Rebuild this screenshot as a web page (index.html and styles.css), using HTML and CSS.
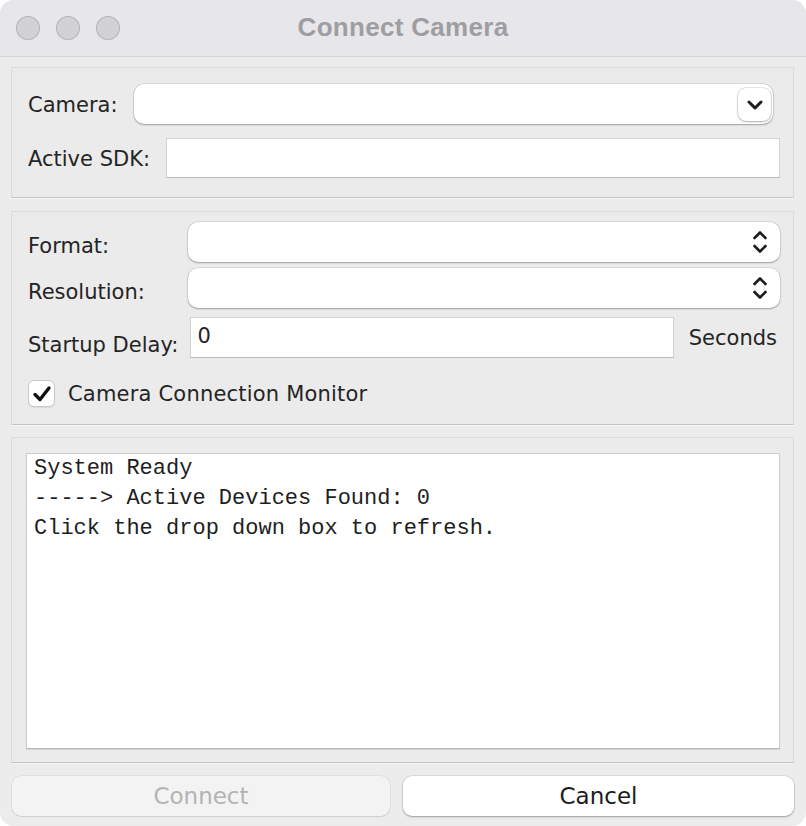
FILE: index.html
```html
<!DOCTYPE html>
<html>
<head>
<meta charset="utf-8">
<link rel="stylesheet" href="styles.css">
</head>
<body>
<div class="window">
  <div class="titlebar">
    <div class="lights">
      <span class="light"></span><span class="light"></span><span class="light"></span>
    </div>
    <div class="title">Connect Camera</div>
  </div>
  <div class="content">
    <div class="panel panel-camera">
      <div class="row">
        <span class="label">Camera:</span>
        <div class="combo combo-camera">
          <span class="drop-btn">
            <svg width="16" height="10" viewBox="0 0 16 10"><path d="M2 2 L8 8 L14 2" fill="none" stroke="#1c1c1c" stroke-width="3" stroke-linecap="round" stroke-linejoin="round"/></svg>
          </span>
        </div>
      </div>
      <div class="row">
        <span class="label">Active SDK:</span>
        <div class="field field-sdk"></div>
      </div>
    </div>

    <div class="panel panel-format">
      <div class="grid">
        <span class="label label-grid">Format:</span>
        <div class="combo combo-wide">
          <svg class="updown" width="16" height="26" viewBox="0 0 16 26"><path d="M2.5 9 L8 3.5 L13.5 9 M2.5 17 L8 22.5 L13.5 17" fill="none" stroke="#1c1c1c" stroke-width="2.6" stroke-linecap="round" stroke-linejoin="round"/></svg>
        </div>
        <span class="label label-grid">Resolution:</span>
        <div class="combo combo-wide">
          <svg class="updown" width="16" height="26" viewBox="0 0 16 26"><path d="M2.5 9 L8 3.5 L13.5 9 M2.5 17 L8 22.5 L13.5 17" fill="none" stroke="#1c1c1c" stroke-width="2.6" stroke-linecap="round" stroke-linejoin="round"/></svg>
        </div>
        <span class="label label-delay">Startup Delay:</span>
        <div class="field field-delay">0</div>
        <span class="label seconds">Seconds</span>
      </div>
      <div class="check-row">
        <span class="checkbox">
          <svg width="20" height="18" viewBox="0 0 20 18"><path d="M3 9.5 L8 14.5 L17 3" fill="none" stroke="#111" stroke-width="3.4" stroke-linecap="round" stroke-linejoin="round"/></svg>
        </span>
        <span class="label check-label">Camera Connection Monitor</span>
      </div>
    </div>

    <div class="panel panel-log">
      <div class="log"><pre>System Ready
-----&gt; Active Devices Found: 0
Click the drop down box to refresh.</pre></div>
    </div>

    <div class="buttons">
      <div class="btn btn-disabled">Connect</div>
      <div class="btn btn-cancel">Cancel</div>
    </div>
  </div>
</div>
</body>
</html>
```
FILE: styles.css
```css
html, body {
  margin: 0;
  padding: 0;
  background: #ffffff;
}

.window {
  width: 806px;
  height: 826px;
  background: #ececec;
  border-radius: 14px;
  overflow: hidden;
  display: flex;
  flex-direction: column;
  font-family: "DejaVu Sans", "Open Sans", sans-serif;
  color: #242424;
}

.titlebar {
  height: 56px;
  flex: none;
  background: #e7e6ea;
  border-bottom: 1px solid #d3d3d5;
  position: relative;
  display: flex;
  align-items: center;
  justify-content: center;
}

.lights {
  position: absolute;
  left: 16px;
  top: 16px;
  display: flex;
  gap: 16px;
}

.light {
  width: 24px;
  height: 24px;
  border-radius: 50%;
  background: #d1d0d3;
  box-shadow: inset 0 0 0 1px #b7b6ba;
}

.title {
  font-family: "Liberation Sans", Arial, sans-serif;
  font-weight: bold;
  font-size: 26px;
  color: #9e9da2;
  letter-spacing: 0.3px;
  margin-top: -2px;
}

.content {
  flex: 1;
  display: flex;
  flex-direction: column;
  padding: 10px 12px 10px 11px;
}

.panel {
  background: #ebebeb;
  border: 1px solid #dadada;
  border-bottom-color: #c4c4c4;
  box-shadow: 0 1px 0 #f6f6f6;
}

.label {
  font-size: 21px;
  line-height: 24px;
  white-space: nowrap;
}

/* Panel 1 */
.panel-camera {
  height: 131px;
  box-sizing: border-box;
  padding: 16px 13px 0 16px;
  display: flex;
  flex-direction: column;
  gap: 14px;
}

.row {
  display: flex;
  align-items: center;
  gap: 16px;
}

.row .label {
  padding-top: 1px;
}

.combo {
  height: 40px;
  box-sizing: border-box;
  background: #fff;
  border-radius: 10px;
  box-shadow: 0 0 0 0.5px rgba(0,0,0,0.14), 0 1px 2px rgba(0,0,0,0.28);
  display: flex;
  align-items: center;
  justify-content: flex-end;
}

.combo-camera {
  flex: 1;
  margin-right: 7px;
  padding-right: 2px;
}

.drop-btn {
  width: 33px;
  height: 33px;
  box-sizing: border-box;
  border-radius: 8px;
  background: #fff;
  box-shadow: 0 0 0 0.5px rgba(0,0,0,0.2), 0 1px 2px rgba(0,0,0,0.25);
  display: flex;
  align-items: center;
  justify-content: center;
  margin-top: 1px;
}

.field {
  background: #fff;
  border: 1px solid #d2d2d2;
  border-bottom-color: #b8b8b8;
  box-sizing: border-box;
  height: 40px;
}

.field-sdk {
  flex: 1;
}

/* Panel 2 */
.panel-format {
  margin-top: 13px;
  height: 214px;
  box-sizing: border-box;
  padding: 10px 13px 0 16px;
}

.grid {
  display: grid;
  grid-template-columns: auto 1fr auto;
  column-gap: 10px;
  row-gap: 6px;
  align-items: center;
}

.label-grid {
  padding-top: 7px;
}

.combo-wide {
  grid-column: 2 / 4;
  padding-right: 12px;
}

.updown {
  display: block;
}

.label-delay {
  align-self: end;
  margin-top: 3px;
  margin-bottom: 1px;
}

.field-delay {
  margin-top: 3px;
  margin-left: 2px;
  height: 41px;
  font-size: 21px;
  line-height: 24px;
  padding: 6px 0 0 6px;
}

.seconds {
  padding-left: 5px;
  padding-right: 3px;
  margin-top: 3px;
}

.check-row {
  display: flex;
  align-items: center;
  gap: 13px;
  margin-top: 22px;
}

.check-label {
  letter-spacing: 0.2px;
}

.checkbox {
  width: 27px;
  height: 27px;
  box-sizing: border-box;
  background: #fff;
  border: 1px solid #c9c9c9;
  border-radius: 6px;
  display: flex;
  align-items: center;
  justify-content: center;
  box-shadow: 0 1px 1px rgba(0,0,0,0.08);
}

/* Panel 3 */
.panel-log {
  margin-top: 12px;
  flex: 1;
  padding: 15px 13px 13px 14px;
  display: flex;
}

.log {
  flex: 1;
  background: #fff;
  border: 1px solid #cdcdcd;
  border-bottom-color: #b5b5b5;
  box-shadow: 0 1px 1px rgba(0,0,0,0.08);
}

.log pre {
  margin: 0;
  padding-left: 7px;
  font-family: "Liberation Mono", "Courier New", monospace;
  font-size: 22px;
  line-height: 30px;
  color: #1e1e1e;
}

/* Buttons */
.buttons {
  margin-top: 13px;
  display: grid;
  grid-template-columns: 378px 1fr;
  column-gap: 13px;
  padding-left: 1px;
}

.btn {
  height: 40px;
  box-sizing: border-box;
  border-radius: 9px;
  display: flex;
  align-items: center;
  justify-content: center;
  font-size: 23px;
}

.btn-disabled {
  background: #f3f3f3;
  box-shadow: 0 0 0 0.5px rgba(0,0,0,0.1), 0 1px 1px rgba(0,0,0,0.08);
  color: #b3b3b3;
}

.btn-cancel {
  background: #fff;
  box-shadow: 0 0 0 0.5px rgba(0,0,0,0.14), 0 1px 2px rgba(0,0,0,0.28);
  color: #1c1c1c;
}
```
